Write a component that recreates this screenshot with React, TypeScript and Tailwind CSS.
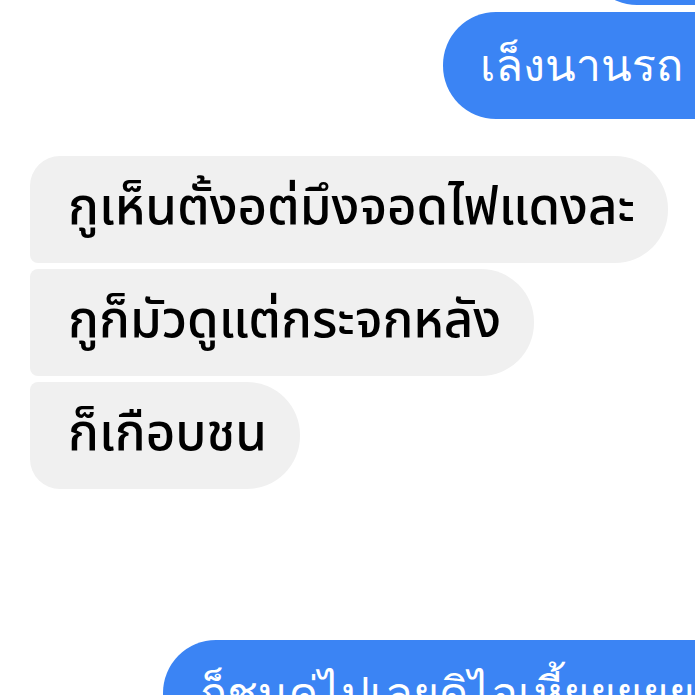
const GRAY = [
  { text: "กูเห็นตั้งอต่มึงจอดไฟแดงละ", shape: "rounded-tl-[30px] rounded-bl-[8px]" },
  { text: "กูก็มัวดูแต่กระจกหลัง", shape: "rounded-tl-[8px] rounded-bl-[8px]" },
  { text: "ก็เกือบชน", shape: "rounded-tl-[8px] rounded-bl-[30px]" },
];

export default function App() {
  return (
    <div className="h-[695px] w-[695px] overflow-hidden bg-white font-['Noto_Sans_Thai','Noto_Sans',sans-serif]">
      {/* tail of the previous outgoing bubble */}
      <div className="flex justify-end">
        <div className="-mt-[100px] mr-[-60px] h-[105px] w-[170px] rounded-[52px] bg-[#3b84f4]" />
      </div>

      <div className="mt-[7px] pl-[443px]">
        <div className="flex h-[107px] w-[400px] items-center whitespace-nowrap rounded-l-[53px] bg-[#3b84f4] pl-[37px] font-['Garuda','Loma','Noto_Sans_Thai',sans-serif] text-[45px] text-white">
          เล็งนานรถ
        </div>
      </div>

      <div className="mt-[37px] flex flex-col items-start gap-[6px] pl-[30px]">
        {GRAY.map((m) => (
          <div
            key={m.text}
            className={`flex h-[107px] items-center whitespace-nowrap rounded-r-[53px] bg-[#f0f0f0] pl-[38px] pr-[33px] text-[51px] font-medium text-black ${m.shape}`}
          >
            {m.text}
          </div>
        ))}
      </div>

      <div className="mt-[151px] pl-[163px]">
        <div className="flex h-[107px] w-[900px] items-center whitespace-nowrap rounded-l-[53px] bg-[#3b84f4] pl-[37px] font-['Garuda','Loma','Noto_Sans_Thai',sans-serif] text-[45px] text-white">
          ก็ชนคู่ไปเลยดิไอเหี้ยยยยย
        </div>
      </div>
    </div>
  );
}
